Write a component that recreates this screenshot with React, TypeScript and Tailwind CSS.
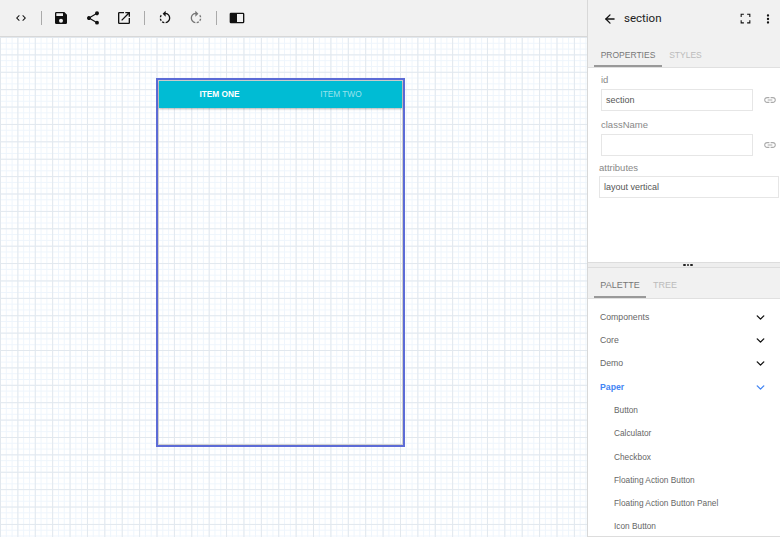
import { ArrowLeft, ChevronDown } from "lucide-react";
import type { ReactNode } from "react";

function ToolIcon({ children, size = "h-[16px] w-[16px]" }: { children: ReactNode; size?: string }) {
  return (
    <svg viewBox="0 0 24 24" className={`${size} fill-[#111]`} aria-hidden="true">
      {children}
    </svg>
  );
}

function ToolButton({ children }: { children: ReactNode }) {
  return <div className="flex w-[31.5px] items-center justify-center">{children}</div>;
}

function Divider() {
  return <div className="mx-[4px] h-[14px] w-px bg-[#aaa]" />;
}

function Field({ label, value }: { label: string; value: string }) {
  return (
    <div className="pl-[13px]">
      <div className="h-[15px] text-[9.5px] leading-[15px] text-[#888]">{label}</div>
      <div className="mt-[2px] flex items-center">
        <div className="flex h-[22px] w-[152px] items-center border border-[#e6e6e6] bg-white pl-[4px] pt-px text-[9px] text-[#555]">
          {value}
        </div>
        <svg viewBox="0 0 24 24" className="ml-[10px] h-[14px] w-[14px] fill-[#aaa]" aria-hidden="true">
          <path d="M3.9 12c0-1.71 1.39-3.1 3.1-3.1h4V7H7c-2.76 0-5 2.24-5 5s2.24 5 5 5h4v-1.9H7c-1.71 0-3.1-1.39-3.1-3.1zM8 13h8v-2H8v2zm9-6h-4v1.9h4c1.71 0 3.1 1.39 3.1 3.1s-1.39 3.1-3.1 3.1h-4V17h4c2.76 0 5-2.24 5-5s-2.24-5-5-5z" />
        </svg>
      </div>
    </div>
  );
}

const groups = ["Components", "Core", "Demo"];
const paper = ["Button", "Calculator", "Checkbox", "Floating Action Button", "Floating Action Button Panel", "Icon Button"];

export default function App() {
  return (
    <div className="flex h-[537px] w-[780px] overflow-hidden bg-white font-['Liberation_Sans',sans-serif]">
      {/* Canvas side */}
      <div className="flex w-[587px] flex-col">
        <div className="flex h-[37px] shrink-0 items-center border-b border-[#d8d8d8] bg-[#f1f1f1] pl-[5px]">
          <ToolButton>
            <ToolIcon size="h-[12px] w-[12px]">
              <path d="M9.4 16.6 4.8 12l4.6-4.6L8 6l-6 6 6 6 1.4-1.4zm5.2 0 4.6-4.6-4.6-4.6L16 6l6 6-6 6-1.4-1.4z" />
            </ToolIcon>
          </ToolButton>
          <Divider />
          <ToolButton>
            <ToolIcon>
              <path d="M17 3H5a2 2 0 0 0-2 2v14a2 2 0 0 0 2 2h14a2 2 0 0 0 2-2V7l-4-4zm-5 16a3 3 0 1 1 0-6 3 3 0 0 1 0 6zm3-10H5V5h10v4z" />
            </ToolIcon>
          </ToolButton>
          <ToolButton>
            <ToolIcon>
              <path d="M18 16.08c-.76 0-1.44.3-1.96.77L8.91 12.7c.05-.23.09-.46.09-.7s-.04-.47-.09-.7l7.05-4.11A2.99 2.99 0 0 0 21 5a3 3 0 1 0-6 0c0 .24.04.47.09.7L8.04 9.81A3 3 0 1 0 6 15c.79 0 1.5-.31 2.04-.81l7.12 4.16c-.05.21-.08.43-.08.65A2.92 2.92 0 1 0 18 16.08z" />
            </ToolIcon>
          </ToolButton>
          <ToolButton>
            <ToolIcon>
              <path d="M19 19H5V5h7V3H5a2 2 0 0 0-2 2v14a2 2 0 0 0 2 2h14a2 2 0 0 0 2-2v-7h-2v7zM14 3v2h3.59l-9.83 9.83 1.41 1.41L19 6.41V10h2V3h-7z" />
            </ToolIcon>
          </ToolButton>
          <Divider />
          <ToolButton>
            <ToolIcon>
              <path d="M7.11 8.53 5.7 7.11C4.8 8.27 4.24 9.61 4.07 11h2.02c.14-.87.49-1.72 1.02-2.47zM6.09 13H4.07c.17 1.39.72 2.73 1.62 3.89l1.41-1.42c-.52-.75-.87-1.59-1.01-2.47zm1.01 5.32c1.16.9 2.51 1.44 3.9 1.61V17.9c-.87-.15-1.71-.49-2.46-1.03L7.1 18.32zM13 4.07V1L8.45 5.55 13 10V6.09c2.84.48 5 2.94 5 5.91s-2.16 5.43-5 5.91v2.02c3.95-.49 7-3.85 7-7.93s-3.05-7.44-7-7.93z" />
            </ToolIcon>
          </ToolButton>
          <ToolButton>
            <ToolIcon>
              <path
                fillOpacity="0.55"
                d="M15.55 5.55 11 1v3.07C7.06 4.56 4 7.92 4 12s3.05 7.44 7 7.93v-2.02c-2.84-.48-5-2.94-5-5.91s2.16-5.43 5-5.91V10l4.55-4.45zM19.93 11c-.17-1.39-.72-2.73-1.62-3.89l-1.42 1.42c.54.75.88 1.6 1.02 2.47h2.02zM13 17.9v2.02c1.39-.17 2.74-.71 3.9-1.61l-1.44-1.44c-.75.54-1.59.89-2.46 1.03zm3.89-2.42 1.42 1.41c.9-1.16 1.45-2.5 1.62-3.89h-2.02c-.14.87-.48 1.72-1.02 2.48z"
              />
            </ToolIcon>
          </ToolButton>
          <Divider />
          <ToolButton>
            <ToolIcon>
              <path d="M21 4H3a2 2 0 0 0-2 2v12a2 2 0 0 0 2 2h18a2 2 0 0 0 2-2V6a2 2 0 0 0-2-2zm0 14h-9V6h9v12z" />
            </ToolIcon>
          </ToolButton>
        </div>
        <div className="flex-1 bg-white bg-[linear-gradient(#e2e8ee_1px,transparent_1px),linear-gradient(90deg,#e2e8ee_1px,transparent_1px),linear-gradient(#eef5fc_1px,transparent_1px),linear-gradient(90deg,#eef5fc_1px,transparent_1px)] bg-[size:17.4px_17.4px,17.4px_17.4px,5.8px_5.8px,5.8px_5.8px] pl-[156px] pt-[41px]">
          <div className="h-[369px] w-[249px] border-2 border-[#5c6bd6]">
            <div className="h-full border border-[#cfcfcf]">
              <div className="flex h-[27px] items-center bg-[#00bcd4] text-[8.3px] shadow-[0_1px_2px_rgba(0,0,0,0.3)]">
                <div className="w-[121px] text-center font-bold text-white">ITEM ONE</div>
                <div className="w-[122px] text-center text-white/60">ITEM TWO</div>
              </div>
            </div>
          </div>
        </div>
      </div>

      {/* Right panel */}
      <div className="flex w-[193px] flex-col border-l border-[#d8d8d8]">
        <div className="h-[68px] shrink-0 border-b border-[#e0e0e0] bg-[#f1f1f1]">
          <div className="flex h-[37px] items-center pl-[15px]">
            <ArrowLeft className="h-[14px] w-[14px] text-[#111]" strokeWidth={2.2} />
            <span className="ml-[7px] font-['Roboto',sans-serif] text-[11.5px] text-[#222]">section</span>
            <div className="ml-auto flex items-center pr-[5px]">
              <svg viewBox="0 0 24 24" className="h-[13px] w-[13px] fill-[#111]" aria-hidden="true">
                <path d="M5 15H3v6h6v-2H5v-4zM3 9h2V5h4V3H3v6zm16 10h-4v2h6v-6h-2v4zM15 3v2h4v4h2V3h-6z" />
              </svg>
              <svg viewBox="0 0 24 24" className="ml-[9px] h-[14px] w-[14px] fill-[#111]" aria-hidden="true">
                <path d="M12 8a2 2 0 1 0 0-4 2 2 0 0 0 0 4zm0 2a2 2 0 1 0 0 4 2 2 0 0 0 0-4zm0 6a2 2 0 1 0 0 4 2 2 0 0 0 0-4z" />
              </svg>
            </div>
          </div>
          <div className="flex h-[30px] pl-[6px] text-[8.5px]">
            <div className="flex w-[68px] items-center justify-center border-b-2 border-[#999] pt-[9px] text-[#777]">PROPERTIES</div>
            <div className="flex w-[47px] items-center justify-center pb-[2px] pt-[9px] text-[#bbb]">STYLES</div>
          </div>
        </div>

        <div className="h-[194px] shrink-0 pt-[4px]">
          <Field label="id" value="section" />
          <div className="h-[6px]" />
          <Field label="className" value="" />
          <div className="pl-[11px] pt-[4px]">
            <div className="h-[15px] text-[9.5px] leading-[15px] text-[#888]">attributes</div>
            <div className="mt-[1px] flex h-[22px] w-[180px] items-center border border-[#e6e6e6] pl-[4px] pt-px text-[9px] text-[#555]">
              layout vertical
            </div>
          </div>
        </div>

        <div className="flex h-[6px] shrink-0 items-center justify-center border-y border-[#ddd] bg-[#eee] pl-[8px]">
          <div className="flex gap-px">
            <div className="h-[2.5px] w-[2.5px] rounded-full bg-[#222]" />
            <div className="h-[2.5px] w-[2.5px] rounded-full bg-[#222]" />
            <div className="h-[2.5px] w-[2.5px] rounded-full bg-[#222]" />
          </div>
        </div>

        <div className="flex h-[31px] shrink-0 border-b border-[#e0e0e0] bg-[#f1f1f1] pl-[6px] text-[9px]">
          <div className="flex w-[52px] items-center justify-center border-b-2 border-[#999] pt-[7px] text-[#777]">PALETTE</div>
          <div className="flex w-[38px] items-center justify-center pb-[2px] pt-[7px] text-[#bbb]">TREE</div>
        </div>

        <div className="flex-1 overflow-hidden border-b border-[#ddd] pt-[7px] text-[8.7px] text-[#666]">
          {groups.map((g) => (
            <div key={g} className="flex h-[23.2px] items-center justify-between pl-[12px] pr-[13px]">
              <span>{g}</span>
              <ChevronDown className="h-[13px] w-[13px] text-[#111]" strokeWidth={2.5} />
            </div>
          ))}
          <div className="flex h-[23.2px] items-center justify-between pl-[12px] pr-[13px] font-bold text-[#4285f4]">
            <span>Paper</span>
            <ChevronDown className="h-[13px] w-[13px]" strokeWidth={2.5} />
          </div>
          {paper.map((p) => (
            <div key={p} className="flex h-[23.2px] items-center pl-[26px] text-[8.3px]">
              {p}
            </div>
          ))}
        </div>
      </div>
    </div>
  );
}
